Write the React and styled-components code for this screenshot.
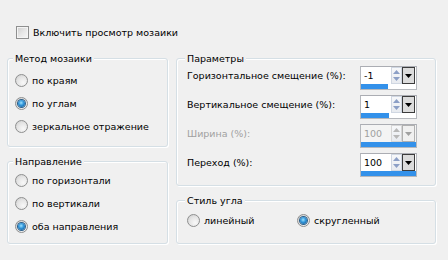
import React from "react";
import styled, { createGlobalStyle } from "styled-components";

const GlobalStyle = createGlobalStyle`
  html, body {
    margin: 0;
    background: #f0f0f0;
  }
  body {
    font-family: "DejaVu Sans", Verdana, sans-serif;
    font-size: 9.5px;
    color: #000;
  }
`;

const methods = ["по краям", "по углам", "зеркальное отражение"];
const directions = ["по горизонтали", "по вертикали", "оба направления"];
const corners = ["линейный", "скругленный"];

const params = [
  { label: "Горизонтальное смещение (%):", value: -1, min: -100, max: 100 },
  { label: "Вертикальное смещение (%):", value: 1, min: -100, max: 100 },
  { label: "Ширина (%):", value: 100, min: 0, max: 100, disabled: true },
  { label: "Переход (%):", value: 100, min: 0, max: 100 },
];

export default function App() {
  return (
    <>
      <GlobalStyle />
      <Dialog>
        <CheckRow>
          <CheckBox />
          <span>Включить просмотр мозаики</span>
        </CheckRow>
        <Columns>
          <Column $width={161}>
            <GroupBox $height={89} $pad={7}>
              <GroupTitle>Метод мозаики</GroupTitle>
              <RadioList $offset={4}>
                {methods.map((m, i) => (
                  <RadioOption key={m}>
                    <RadioCircle $checked={i === 1} />
                    {m}
                  </RadioOption>
                ))}
              </RadioList>
            </GroupBox>
            <GroupBox $height={83} $pad={7}>
              <GroupTitle>Направление</GroupTitle>
              <RadioList $offset={1}>
                {directions.map((m, i) => (
                  <RadioOption key={m}>
                    <RadioCircle $checked={i === 2} />
                    {m}
                  </RadioOption>
                ))}
              </RadioList>
            </GroupBox>
          </Column>
          <Column $width={260}>
            <GroupBox $height={128} $pad={10}>
              <GroupTitle>Параметры</GroupTitle>
              <ParamList>
                {params.map((p) => (
                  <ParamRow key={p.label}>
                    <ParamLabel $disabled={p.disabled}>{p.label}</ParamLabel>
                    <SpinBox {...p} />
                  </ParamRow>
                ))}
              </ParamList>
            </GroupBox>
            <GroupBox $height={44} $pad={10}>
              <GroupTitle>Стиль угла</GroupTitle>
              <RadioGrid>
                {corners.map((m, i) => (
                  <RadioOption key={m}>
                    <RadioCircle $checked={i === 1} />
                    {m}
                  </RadioOption>
                ))}
              </RadioGrid>
            </GroupBox>
          </Column>
        </Columns>
      </Dialog>
    </>
  );
}

function SpinBox({ value, min, max, disabled }) {
  const pct = ((value - min) / (max - min)) * 100;
  return (
    <SpinFrame $disabled={disabled}>
      <SpinTop>
        <SpinInput $disabled={disabled}>{value}</SpinInput>
        <Spinner $disabled={disabled}>
          <SpinHalf>
            <svg width="7" height="4" viewBox="0 0 7 4">
              <path d="M3.5 0 L7 4 L0 4 Z" fill={disabled ? "#b8b8b8" : "#8c9fc6"} />
            </svg>
          </SpinHalf>
          <SpinHalf>
            <svg width="7" height="4" viewBox="0 0 7 4">
              <path d="M0 0 L7 0 L3.5 4 Z" fill={disabled ? "#b8b8b8" : "#8c9fc6"} />
            </svg>
          </SpinHalf>
        </Spinner>
        <DropButton $disabled={disabled}>
          <svg width="7" height="4" viewBox="0 0 7 4">
            <path d="M0 0 L7 0 L3.5 4 Z" fill={disabled ? "#a0a0a0" : "#000"} />
          </svg>
        </DropButton>
      </SpinTop>
      <BarTrack>
        <Bar style={{ width: `${pct}%` }} />
      </BarTrack>
    </SpinFrame>
  );
}

const Dialog = styled.div`
  width: 448px;
  height: 260px;
  box-sizing: border-box;
  padding: 26px 0 0 7px;
`;

const CheckRow = styled.label`
  display: flex;
  align-items: center;
  gap: 4px;
  height: 13px;
  padding-left: 9px;
`;

const CheckBox = styled.span`
  width: 13px;
  height: 13px;
  box-sizing: border-box;
  border: 1px solid #8e8f8f;
  background: linear-gradient(135deg, #cdcdcd 0%, #e6e6e6 50%, #f7f7f7 100%);
  box-shadow: inset 0 0 0 1px #f4f4f4;
  flex: none;
`;

const Columns = styled.div`
  display: flex;
  gap: 8px;
  margin-top: 19px;
`;

const Column = styled.div`
  display: flex;
  flex-direction: column;
  gap: 14px;
  width: ${(p) => p.$width}px;
`;

const GroupBox = styled.div`
  display: flex;
  flex-direction: column;
  box-sizing: border-box;
  height: ${(p) => p.$height}px;
  padding: 0 0 0 ${(p) => p.$pad}px;
  border: 1px solid #d5dfe5;
  border-radius: 3px;
  box-shadow: inset 1px 1px 0 #fff, 1px 1px 0 #fff;
`;

const GroupTitle = styled.span`
  align-self: flex-start;
  margin: -7px 0 0 -2px;
  padding: 0 2px;
  line-height: 13px;
  background: #f0f0f0;
`;

const RadioList = styled.div`
  display: flex;
  flex-direction: column;
  margin-top: ${(p) => p.$offset}px;
`;

const RadioGrid = styled.div`
  display: grid;
  grid-template-columns: 110px auto;
  margin-top: 2px;
`;

const RadioOption = styled.label`
  display: flex;
  align-items: center;
  gap: 4px;
  height: 23px;
  white-space: nowrap;
`;

const RadioCircle = styled.span`
  width: 13px;
  height: 13px;
  box-sizing: border-box;
  border-radius: 50%;
  border: 1px solid #8e8f8f;
  background: radial-gradient(circle at 65% 70%, #f8f8f8 0%, #e4e4e4 55%, #c8c8c8 100%);
  display: flex;
  align-items: center;
  justify-content: center;
  flex: none;

  &::after {
    content: "";
    display: ${(p) => (p.$checked ? "block" : "none")};
    width: 7px;
    height: 7px;
    border-radius: 50%;
    background: radial-gradient(circle at 45% 40%, #9de3ff 0%, #2f93d8 45%, #0f4f86 100%);
    box-shadow: 0 0 0 1px #2b5f8a;
  }
`;

const ParamList = styled.div`
  display: flex;
  flex-direction: column;
  gap: 5px;
  margin-top: 1px;
  padding-right: 18px;
`;

const ParamRow = styled.div`
  display: flex;
  align-items: flex-start;
  justify-content: space-between;
  height: 24px;
`;

const ParamLabel = styled.span`
  line-height: 20px;
  white-space: nowrap;
  color: ${(p) => (p.$disabled ? "#a0a0a0" : "#000")};
`;

const SpinFrame = styled.div`
  width: 57px;
  height: 24px;
  box-sizing: border-box;
  border: 1px solid #b5b8bd;
  border-top-color: #abadb3;
  display: flex;
  flex-direction: column;
  background: ${(p) => (p.$disabled ? "#f4f4f4" : "#fff")};
`;

const SpinTop = styled.div`
  display: flex;
  height: 17px;
`;

const SpinInput = styled.span`
  flex: 1;
  padding-left: 3px;
  line-height: 17px;
  color: ${(p) => (p.$disabled ? "#a0a0a0" : "#000")};
`;

const Spinner = styled.div`
  width: 11px;
  display: flex;
  flex-direction: column;
  box-sizing: border-box;
  border: 1px solid ${(p) => (p.$disabled ? "#d6d6d6" : "#d0d7e2")};
  background: linear-gradient(#f7f8fa, #e8ebf0);
`;

const SpinHalf = styled.div`
  flex: 1;
  display: flex;
  align-items: center;
  justify-content: center;
`;

const DropButton = styled.div`
  width: 13px;
  margin-right: 1px;
  box-sizing: border-box;
  border: 1px solid ${(p) => (p.$disabled ? "#b0b0b0" : "#3c3c3c")};
  background: ${(p) => (p.$disabled ? "#f0f0f0" : "#dcdcdc")};
  display: flex;
  align-items: center;
  justify-content: center;
`;

const BarTrack = styled.div`
  height: 5px;
`;

const Bar = styled.div`
  height: 100%;
  background: #3391ea;
`;
